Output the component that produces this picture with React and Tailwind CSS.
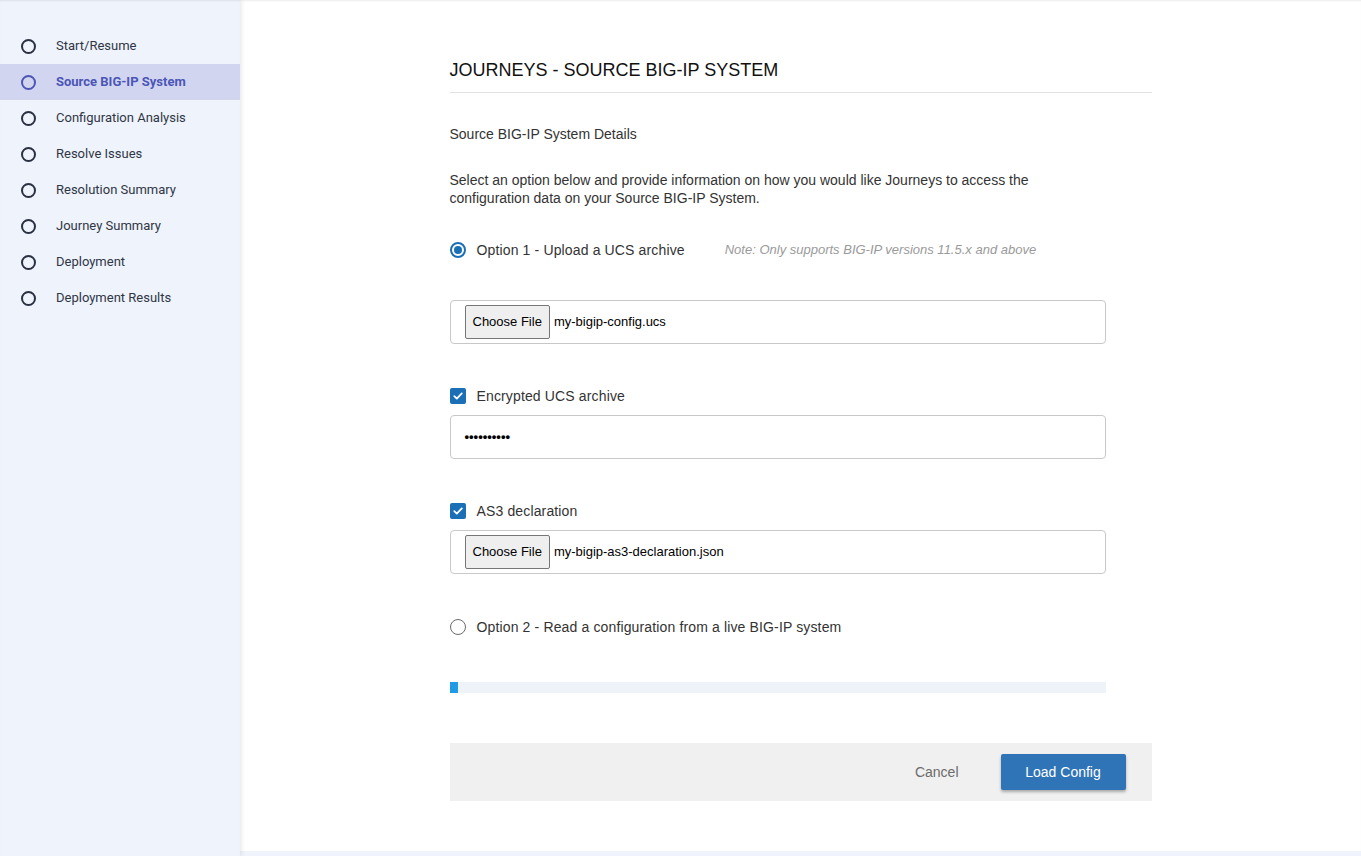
import React from "react";

const steps = [
  "Start/Resume",
  "Source BIG-IP System",
  "Configuration Analysis",
  "Resolve Issues",
  "Resolution Summary",
  "Journey Summary",
  "Deployment",
  "Deployment Results",
];

function Check() {
  return (
    <span className="w-4 h-4 rounded-[2px] bg-[#1a6fb5] flex items-center justify-center shrink-0">
      <svg width="12" height="12" viewBox="0 0 12 12" fill="none">
        <path d="M2.3 6.2 L4.8 8.6 L9.8 3.4" stroke="white" strokeWidth="1.8" strokeLinecap="round" strokeLinejoin="round" />
      </svg>
    </span>
  );
}

function Radio({ checked }) {
  return checked ? (
    <span className="w-4 h-4 rounded-full border-2 border-[#1a6fb5] flex items-center justify-center shrink-0">
      <span className="w-2 h-2 rounded-full bg-[#1a6fb5]" />
    </span>
  ) : (
    <span className="w-4 h-4 rounded-full border-[1.5px] border-[#6b6b6b] shrink-0" />
  );
}

function FileBox({ name }) {
  return (
    <div className="h-[44px] w-[656px] border border-[#c8c8c8] rounded-[4px] flex items-center pl-[14px]">
      <span className="h-[34px] px-[7px] flex items-center bg-[#efefef] border border-[#767676] rounded-[2px] text-[13px] text-black">
        Choose File
      </span>
      <span className="ml-[4px] text-[13px] text-black">{name}</span>
    </div>
  );
}

export default function App() {
  return (
    <div className="h-[856px] w-full flex bg-[#eff3fb] overflow-hidden" style={{ fontFamily: "'Liberation Sans', Arial, sans-serif" }}>
      <aside
        className="w-[240px] h-full shrink-0 bg-[#eff3fb] z-10 pt-[28px] shadow-[inset_0_2px_2px_-1px_rgba(0,0,0,0.08),2px_0_4px_rgba(0,0,0,0.08)]"
        style={{ fontFamily: "Roboto, 'Liberation Sans', sans-serif" }}
      >
        {steps.map((s, i) => {
          const active = i === 1;
          return (
            <div
              key={s}
              className={
                "h-[36px] flex items-center pl-[21px] " +
                (active ? "bg-[#d1d5f0]" : "")
              }
            >
              <span
                className={
                  "w-[15px] h-[15px] rounded-full border-2 shrink-0 " +
                  (active ? "border-[#4b56b6]" : "border-[#2a3142]")
                }
              />
              <span
                className={
                  "ml-[20px] text-[13px] " +
                  (active ? "text-[#4b56b6] font-bold" : "text-[#2f3646]")
                }
              >
                {s}
              </span>
            </div>
          );
        })}
      </aside>
      <main className="flex-1 h-[851px] bg-white shadow-[inset_0_2px_2px_-1px_rgba(0,0,0,0.08)]">
        <div className="w-[702px] mx-auto pt-[58px]">
          <h1 className="text-[18px] leading-[24px] text-[#111] pb-[10px] border-b border-[#e2e2e2]">
            JOURNEYS - SOURCE BIG-IP SYSTEM
          </h1>
          <div className="mt-[31px] text-[14px] leading-[20px] text-[#333]">Source BIG-IP System Details</div>
          <p className="mt-[27px] text-[14px] leading-[18px] text-[#333]">
            Select an option below and provide information on how you would like Journeys to access the
            <br />
            configuration data on your Source BIG-IP System.
          </p>
          <div className="mt-[33px] h-[20px] flex items-center">
            <Radio checked />
            <span className="ml-[11px] text-[14px] tracking-[0.14px] text-[#333]">Option 1 - Upload a UCS archive</span>
            <span className="ml-[40px] text-[13px] italic text-[#9a9a9a]">
              Note: Only supports BIG-IP versions 11.5.x and above
            </span>
          </div>
          <div className="mt-[40px]">
            <FileBox name="my-bigip-config.ucs" />
          </div>
          <div className="mt-[42px] h-[20px] flex items-center">
            <Check />
            <span className="ml-[11px] text-[14px] tracking-[0.14px] text-[#333]">Encrypted UCS archive</span>
          </div>
          <div className="mt-[9px] h-[44px] w-[656px] border border-[#c8c8c8] rounded-[4px] flex items-center pl-[14px]">
            <span className="text-[13px] text-black font-bold">••••••••••</span>
          </div>
          <div className="mt-[42px] h-[20px] flex items-center">
            <Check />
            <span className="ml-[11px] text-[14px] tracking-[0.14px] text-[#333]">AS3 declaration</span>
          </div>
          <div className="mt-[9px]">
            <FileBox name="my-bigip-as3-declaration.json" />
          </div>
          <div className="mt-[43px] h-[20px] flex items-center">
            <Radio />
            <span className="ml-[11px] text-[14px] tracking-[0.14px] text-[#333]">Option 2 - Read a configuration from a live BIG-IP system</span>
          </div>
          <div className="mt-[45px] h-[11px] w-[656px] bg-[#eef3f9]">
            <div className="h-full w-[8px] bg-[#1e9be4]" />
          </div>
          <div className="mt-[50px] h-[58px] bg-[#f0f0f0] flex items-center justify-end pr-[26px]">
            <span className="text-[14px] text-[#6b6b6b] mr-[42px]">Cancel</span>
            <button className="h-[36px] w-[125px] bg-[#2f74b6] text-white text-[14px] rounded-[2px] shadow-[0_2px_3px_rgba(0,0,0,0.3)]">
              Load Config
            </button>
          </div>
        </div>
      </main>
    </div>
  );
}
